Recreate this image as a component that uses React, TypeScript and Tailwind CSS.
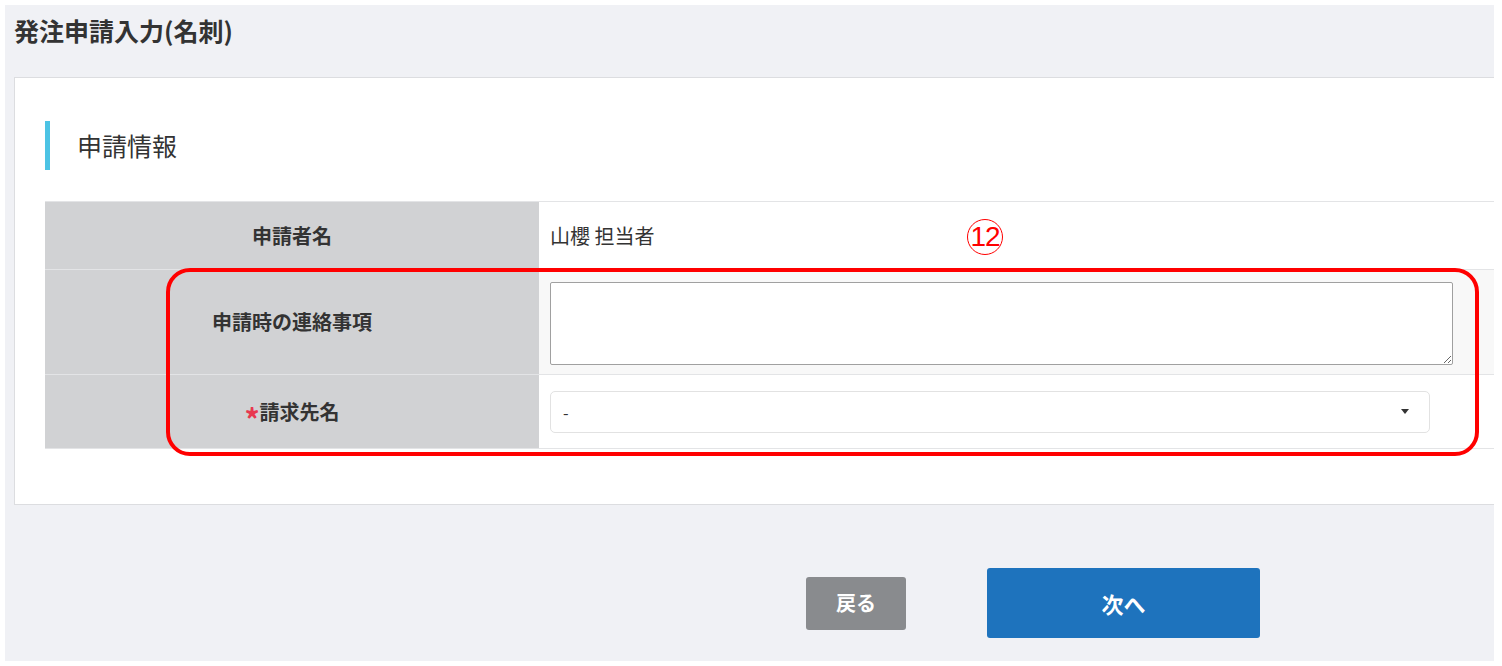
import React from 'react';

const font = '[font-family:"Noto_Sans_CJK_JP","Noto_Sans",sans-serif]';

function Row({ label, required, children, className, height }: { label: string; required?: boolean; children: React.ReactNode; className?: string; height: string }) {
  return (
    <div className={`grid grid-cols-[494px_1fr] border-t border-[#e3e4e6] ${height}`}>
      <div className="bg-[#d1d2d4] flex items-center justify-center text-[20px] font-bold text-[#333]">
        {required && <span className="relative top-[6px] text-[#e8384f] text-[30px] leading-none font-bold">*</span>}
        {label}
      </div>
      <div className={`flex items-center pl-[11px] ${className ?? 'bg-white'}`}>{children}</div>
    </div>
  );
}

export default function App() {
  return (
    <div className={`bg-white pt-[5px] pb-[5px] pl-[5px] pr-[8px] w-[1502px] h-[666px] ${font}`}>
      <div className="bg-[#f0f1f5] h-[656px] overflow-hidden flex flex-col">
        {/* Title */}
        <div className="h-[72px] pl-[9px] pt-[9px]">
          <h1 className="text-[25px] leading-[32px] font-bold text-[#333]">発注申請入力(名刺)</h1>
        </div>

        {/* Card */}
        <div className="ml-[9px] h-[428px] bg-white border border-r-0 border-[#dcdde0] pl-[30px] pt-[43px]">
          <div className="flex items-center h-[49px]">
            <div className="w-[5px] h-full bg-[#4cc3e4]" />
            <h2 className="ml-[27px] text-[25px] text-[#333] font-normal">申請情報</h2>
          </div>

          <div className="relative mt-[31px] border-b border-[#e3e4e6]">
            <Row label="申請者名" height="h-[68px]">
              <span className="text-[20px] text-[#333]">山櫻 担当者</span>
            </Row>
            <Row label="申請時の連絡事項" height="h-[105px]" className="bg-[#f8f8f8]">
              <textarea className="w-[903px] h-[83px] bg-white border border-[#a0a0a0] rounded-[2px] mt-[2px]" />
            </Row>
            <Row label="請求先名" required height="h-[74px]">
              <div className="w-[880px] h-[42px] border border-[#e2e2e2] rounded-[5px] flex items-center justify-between pl-[12px] pr-[20px] text-[16px] text-[#333]">
                <span>-</span>
                <span className="w-0 h-0 border-l-[4px] border-r-[4px] border-t-[5px] border-l-transparent border-r-transparent border-t-[#333]" />
              </div>
            </Row>

            {/* annotation overlay */}
            <div className="absolute left-[121px] top-[67px] w-[1313px] h-[188px] border-[4px] border-[#ff0000] rounded-[24px] pointer-events-none" />
            <div className="absolute left-[922px] top-[18px] w-[36px] h-[36px] rounded-full border-[1.5px] border-[#ff0000] flex items-center justify-center text-[#ff0000] text-[28px] leading-none [font-family:'Liberation_Sans',sans-serif] tracking-[-1px]">
              12
            </div>
          </div>
        </div>

        {/* Buttons */}
        <div className="mt-[63px] h-[70px] flex items-center pl-[801px] gap-[81px]">
          <button className="w-[100px] h-[53px] bg-[#898b8e] rounded-[3px] text-white text-[20px] font-bold">戻る</button>
          <button className="w-[273px] h-[70px] bg-[#1e73bd] rounded-[3px] text-white text-[22px] font-bold">次へ</button>
        </div>
      </div>
    </div>
  );
}
